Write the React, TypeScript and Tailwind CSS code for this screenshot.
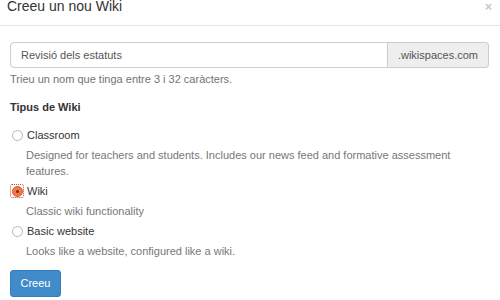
import { useState } from 'react';

type WikiType = 'classroom' | 'wiki' | 'basic';

const options: { id: WikiType; label: string; desc: string }[] = [
  {
    id: 'classroom',
    label: 'Classroom',
    desc: 'Designed for teachers and students. Includes our news feed and formative assessment features.',
  },
  { id: 'wiki', label: 'Wiki', desc: 'Classic wiki functionality' },
  { id: 'basic', label: 'Basic website', desc: 'Looks like a website, configured like a wiki.' },
];

function Radio({ checked }: { checked: boolean }) {
  if (checked) {
    return (
      <span className="flex h-[14px] w-[14px] shrink-0 items-center justify-center rounded-[2px] border border-dotted border-[#c0502c]">
        <span className="flex h-[11px] w-[11px] items-center justify-center rounded-full border border-[#d9572e] bg-[#ef7a52]">
          <span className="h-[3px] w-[3px] rounded-full bg-[#7a2a12]" />
        </span>
      </span>
    );
  }
  return (
    <span className="flex h-[14px] w-[14px] shrink-0 items-center justify-center">
      <span className="h-[11px] w-[11px] rounded-full border border-[#b5b5b5] bg-white" />
    </span>
  );
}

export default function App() {
  const [name, setName] = useState('Revisió dels estatuts');
  const [type, setType] = useState<WikiType>('wiki');

  return (
    <div
      className="relative h-[300px] w-[500px] overflow-hidden bg-white text-[11px] text-[#333]"
      style={{ fontFamily: '"Liberation Sans", Arial, sans-serif' }}
    >
      <div className="flex h-[26px] items-start justify-between border-b border-[#e5e5e5] pl-[7px] pr-[8px]">
        <h4 className="-mt-[1px] text-[14px] leading-[14px] text-[#333]">Creeu un nou Wiki</h4>
        <button type="button" className="mt-[1px] text-[12px] font-bold leading-[12px] text-[#c8c8c8]">
          ×
        </button>
      </div>

      <div className="px-[10px]">
        <div className="mt-[16px] flex h-[26px] w-[479px]">
          <input
            value={name}
            onChange={(e) => setName(e.target.value)}
            className="min-w-0 flex-1 rounded-l-[4px] border border-[#ccc] px-[10px] text-[11px] text-[#555] outline-none"
          />
          <span className="flex items-center rounded-r-[4px] border border-l-0 border-[#ccc] bg-[#eee] px-[10px] text-[11px] text-[#555]">
            .wikispaces.com
          </span>
        </div>

        <p className="mt-[3px] leading-[16px] text-[#737373]">Trieu un nom que tinga entre 3 i 32 caràcters.</p>

        <p className="mt-[12px] font-bold leading-[16px]">Tipus de Wiki</p>

        <div className="mt-[12px] flex flex-col">
          {options.map((o, i) => (
            <label key={o.id} className={i > 0 ? 'mt-[4px] cursor-pointer' : 'cursor-pointer'}>
              <span className="flex items-center gap-[3px] leading-[16px]" onClick={() => setType(o.id)}>
                <Radio checked={type === o.id} />
                {o.label}
              </span>
              <span className="mt-[4px] block pl-[16px] pr-[20px] leading-[16px] text-[#777]">{o.desc}</span>
            </label>
          ))}
        </div>

        <button
          type="button"
          className="mt-[11px] h-[27px] w-[51px] rounded-[3px] border border-[#357ebd] bg-[#428bca] text-[11px] text-white"
        >
          Creeu
        </button>
      </div>
    </div>
  );
}
